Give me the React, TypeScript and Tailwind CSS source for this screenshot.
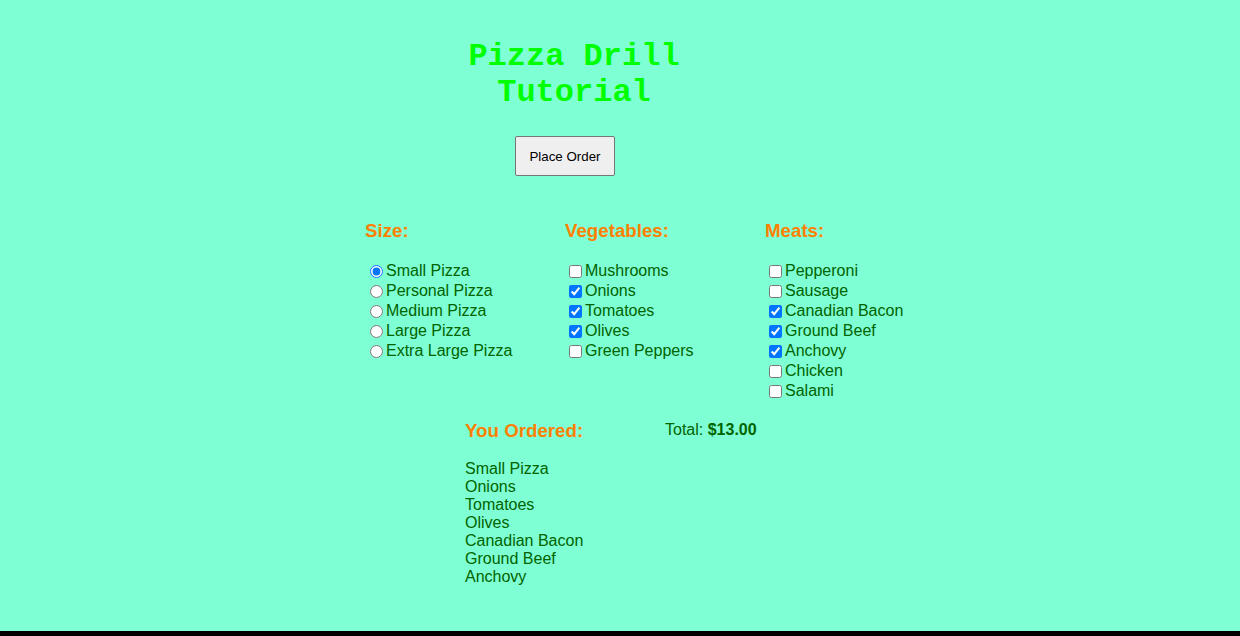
import { useState } from "react";

const sizes = [
  "Small Pizza",
  "Personal Pizza",
  "Medium Pizza",
  "Large Pizza",
  "Extra Large Pizza",
];

const vegetables = ["Mushrooms", "Onions", "Tomatoes", "Olives", "Green Peppers"];

const meats = [
  "Pepperoni",
  "Sausage",
  "Canadian Bacon",
  "Ground Beef",
  "Anchovy",
  "Chicken",
  "Salami",
];

const App = () => {
  const [size, setSize] = useState("Small Pizza");
  const [veg, setVeg] = useState<string[]>(["Onions", "Tomatoes", "Olives"]);
  const [meat, setMeat] = useState<string[]>([
    "Canadian Bacon",
    "Ground Beef",
    "Anchovy",
  ]);

  const toggle = (list: string[], item: string) =>
    list.includes(item) ? list.filter((i) => i !== item) : [...list, item];

  const ordered = [size, ...vegetables.filter((v) => veg.includes(v)), ...meats.filter((m) => meat.includes(m))];

  return (
    <div className="h-[636px] bg-black">
      <div className="h-[631px] bg-[#7fffd4] pl-[365px] font-['Liberation_Sans',Arial,sans-serif] text-[#006400]">
        {/* Title */}
        <h1 className="w-[418px] pt-[39px] text-center font-['Liberation_Mono','Courier_New',monospace] text-[32px] leading-[36px] font-bold text-[#00ff00]">
          Pizza Drill
          <br />
          Tutorial
        </h1>

        <button className="mt-[25px] ml-[150px] h-[40px] w-[100px] rounded-[2px] border border-[#767676] bg-[#efefef] pt-px text-[13.33px] text-black">
          Place Order
        </button>

        {/* Options */}
        <div className="mt-[44px] flex">
          <div className="w-[200px]">
            <h3 className="h-[22px] text-[18.72px] leading-[22px] font-bold text-[#ff8000]">
              Size:
            </h3>
            <div className="mt-[19px]">
              {sizes.map((s) => (
                <label key={s} className="flex h-5 items-center text-base">
                  <input
                    type="radio"
                    name="size"
                    checked={size === s}
                    onChange={() => setSize(s)}
                    className="ml-[5px] mr-[3px] h-[13px] w-[13px]"
                  />
                  {s}
                </label>
              ))}
            </div>
          </div>

          <div className="w-[200px]">
            <h3 className="h-[22px] text-[18.72px] leading-[22px] font-bold text-[#ff8000]">
              Vegetables:
            </h3>
            <div className="mt-[19px]">
              {vegetables.map((v) => (
                <label key={v} className="flex h-5 items-center text-base">
                  <input
                    type="checkbox"
                    checked={veg.includes(v)}
                    onChange={() => setVeg(toggle(veg, v))}
                    className="ml-[4px] mr-[3px] h-[13px] w-[13px]"
                  />
                  {v}
                </label>
              ))}
            </div>
          </div>

          <div className="w-[200px]">
            <h3 className="h-[22px] text-[18.72px] leading-[22px] font-bold text-[#ff8000]">
              Meats:
            </h3>
            <div className="mt-[19px]">
              {meats.map((m) => (
                <label key={m} className="flex h-5 items-center text-base">
                  <input
                    type="checkbox"
                    checked={meat.includes(m)}
                    onChange={() => setMeat(toggle(meat, m))}
                    className="ml-[4px] mr-[3px] h-[13px] w-[13px]"
                  />
                  {m}
                </label>
              ))}
            </div>
          </div>
        </div>

        {/* Order summary */}
        <div className="mt-[19px] ml-[100px] flex">
          <div className="w-[200px]">
            <h3 className="h-[22px] text-[18.72px] leading-[22px] font-bold text-[#ff8000]">
              You Ordered:
            </h3>
            <div className="mt-[18px] text-base leading-[18px]">
              {ordered.map((o) => (
                <div key={o}>{o}</div>
              ))}
            </div>
          </div>
          <div className="text-base leading-[20px]">
            Total: <span className="font-bold">$13.00</span>
          </div>
        </div>
      </div>
    </div>
  );
};

export default App;
